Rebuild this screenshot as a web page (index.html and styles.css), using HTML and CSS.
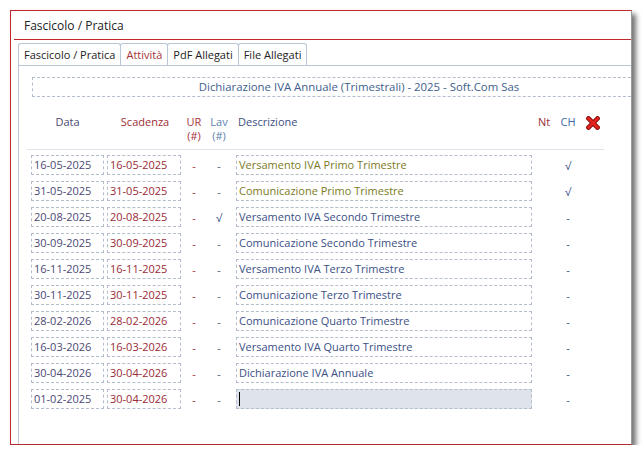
FILE: index.html
```html
<!DOCTYPE html>
<html lang="it">
<head>
    <meta charset="UTF-8">
    <title>Fascicolo / Pratica</title>
    <link rel="stylesheet" href="styles.css">
</head>
<body>

    <div class="window">
        <div class="title-bar">Fascicolo / Pratica</div>

        <div class="tabs">
            <div class="tab">Fascicolo / Pratica</div>
            <div class="tab active">Attività</div>
            <div class="tab">PdF Allegati</div>
            <div class="tab">File Allegati</div>
        </div>

        <div class="panel">
            <div class="caption">Dichiarazione IVA Annuale (Trimestrali) - 2025 - Soft.Com Sas</div>

            <div class="grid head">
                <div class="col-data">Data</div>
                <div class="col-scad">Scadenza</div>
                <div class="col-ur">UR<br>(#)</div>
                <div class="col-lav">Lav<br>(#)</div>
                <div class="col-desc">Descrizione</div>
                <div class="col-nt">Nt</div>
                <div class="col-ch">CH</div>
                <div class="col-del">
                    <svg width="14" height="14" viewBox="0 0 14 14">
                        <path d="M2.5 2.5 L11.5 11.5 M11.5 2.5 L2.5 11.5" stroke="#8e1010" stroke-width="4.6" stroke-linecap="square"/>
                        <path d="M2.5 2.5 L11.5 11.5 M11.5 2.5 L2.5 11.5" stroke="#e3241c" stroke-width="2.6" stroke-linecap="square"/>
                    </svg>
                </div>
            </div>

            <div class="rows">
                <div class="grid row">
                    <div class="field date">16-05-2025</div>
                    <div class="field due">16-05-2025</div>
                    <div class="dash ur">-</div>
                    <div class="dash lav">-</div>
                    <div class="field desc done">Versamento IVA Primo Trimestre</div>
                    <div></div>
                    <div class="dash ch">√</div>
                </div>
                <div class="grid row">
                    <div class="field date">31-05-2025</div>
                    <div class="field due">31-05-2025</div>
                    <div class="dash ur">-</div>
                    <div class="dash lav">-</div>
                    <div class="field desc done">Comunicazione Primo Trimestre</div>
                    <div></div>
                    <div class="dash ch">√</div>
                </div>
                <div class="grid row">
                    <div class="field date">20-08-2025</div>
                    <div class="field due">20-08-2025</div>
                    <div class="dash ur">-</div>
                    <div class="dash lav check">√</div>
                    <div class="field desc">Versamento IVA Secondo Trimestre</div>
                    <div></div>
                    <div class="dash ch">-</div>
                </div>
                <div class="grid row">
                    <div class="field date">30-09-2025</div>
                    <div class="field due">30-09-2025</div>
                    <div class="dash ur">-</div>
                    <div class="dash lav">-</div>
                    <div class="field desc">Comunicazione Secondo Trimestre</div>
                    <div></div>
                    <div class="dash ch">-</div>
                </div>
                <div class="grid row">
                    <div class="field date">16-11-2025</div>
                    <div class="field due">16-11-2025</div>
                    <div class="dash ur">-</div>
                    <div class="dash lav">-</div>
                    <div class="field desc">Versamento IVA Terzo Trimestre</div>
                    <div></div>
                    <div class="dash ch">-</div>
                </div>
                <div class="grid row">
                    <div class="field date">30-11-2025</div>
                    <div class="field due">30-11-2025</div>
                    <div class="dash ur">-</div>
                    <div class="dash lav">-</div>
                    <div class="field desc">Comunicazione Terzo Trimestre</div>
                    <div></div>
                    <div class="dash ch">-</div>
                </div>
                <div class="grid row">
                    <div class="field date">28-02-2026</div>
                    <div class="field due">28-02-2026</div>
                    <div class="dash ur">-</div>
                    <div class="dash lav">-</div>
                    <div class="field desc">Comunicazione Quarto Trimestre</div>
                    <div></div>
                    <div class="dash ch">-</div>
                </div>
                <div class="grid row">
                    <div class="field date">16-03-2026</div>
                    <div class="field due">16-03-2026</div>
                    <div class="dash ur">-</div>
                    <div class="dash lav">-</div>
                    <div class="field desc">Versamento IVA Quarto Trimestre</div>
                    <div></div>
                    <div class="dash ch">-</div>
                </div>
                <div class="grid row">
                    <div class="field date">30-04-2026</div>
                    <div class="field due">30-04-2026</div>
                    <div class="dash ur">-</div>
                    <div class="dash lav">-</div>
                    <div class="field desc">Dichiarazione IVA Annuale</div>
                    <div></div>
                    <div class="dash ch">-</div>
                </div>
                <div class="grid row">
                    <div class="field date">01-02-2025</div>
                    <div class="field due">30-04-2026</div>
                    <div class="dash ur">-</div>
                    <div class="dash lav">-</div>
                    <div class="field desc editing"><span class="caret"></span></div>
                    <div></div>
                    <div class="dash ch">-</div>
                </div>
            </div>
        </div>
    </div>

</body>
</html>
```

FILE: styles.css
```css
/* General */
body {
    margin: 0;
    background-color: #ffffff;
    font-family: "Open Sans", "Noto Sans", sans-serif;
    font-size: 11px;
    color: #333;
}

/* Window */
.window {
    box-sizing: border-box;
    width: 622px;
    height: 435px;
    margin: 10px 0 0 10px;
    display: flex;
    flex-direction: column;
    background-color: #fff;
    border: 1px solid #c1272d;
    border-right-color: #9a9a9a;
    border-bottom-color: #b02a30;
    box-shadow: 4px 4px 5px rgba(0,0,0,0.55);
}

.title-bar {
    height: 28px;
    line-height: 30px;
    margin-left: 3px;
    padding-left: 10px;
    font-size: 12px;
    color: #222;
    border-bottom: 1px solid #c1272d;
}

/* Tabs */
.tabs {
    display: flex;
    margin-top: 3px;
    padding-left: 7px;
}

.tab {
    height: 21px;
    line-height: 22px;
    padding: 0 5px;
    border: 1px solid #b9c6d5;
    border-bottom: none;
    border-radius: 3px 3px 0 0;
    margin-right: -1px;
    color: #222;
    white-space: nowrap;
}

.tab.active { color: #a4333b; }

.panel {
    flex: 1;
    margin-left: 7px;
    padding: 11px 0 0 8px;
    border-top: 1px solid #b9c6d5;
    border-left: 1px solid #b9c6d5;
    overflow: hidden;
}

.caption {
    box-sizing: border-box;
    width: 654px;
    margin-left: 5px;
    height: 20px;
    line-height: 18px;
    font-size: 11.4px;
    text-align: center;
    color: #40608e;
    border: 1px dashed #b4bdcc;
}

/* Grid */
.grid {
    display: grid;
    grid-template-columns: 78px 77px 24px 26px 302px 20px 28px 22px;
    width: 577px;
}

.head {
    margin-top: 18px;
    padding-bottom: 6px;
    line-height: 14px;
    border-bottom: 1px solid #dfe4ec;
}

.head > div { text-align: center; }

.col-data { color: #4a4a70; padding-left: 3px; }
.col-scad { color: #9b2d33; padding-left: 3px; }
.col-ur { color: #a8333c; }
.col-lav { color: #5b7fae; }
.head .col-desc { text-align: left; padding-left: 6px; color: #40507f; }
.col-nt { color: #9b2d3a; }
.col-ch { color: #4068a6; }
.col-del svg { display: block; margin: 1px auto 0; }

.rows { padding-top: 2px; }

.row {
    height: 26px;
    align-items: center;
}

.field {
    box-sizing: border-box;
    height: 20px;
    line-height: 18px;
    padding-left: 2px;
    border: 1px dashed #b4bdcc;
    white-space: nowrap;
    overflow: hidden;
}

.date { margin-left: 4px; width: 73px; color: #4b4973; }
.due { margin-left: 2px; width: 74px; color: #9a2b36; }
.desc { margin-left: 4px; width: 296px; color: #3b4f86; }
.desc.done { color: #7b7b24; }
.desc.editing { background-color: #dfe4ec; }

.caret {
    display: inline-block;
    width: 0;
    height: 14px;
    margin-top: 2px;
    border-left: 1px solid #000;
    vertical-align: top;
}

.dash { text-align: center; }
.ur { color: #a3333b; }
.lav { color: #555a70; }
.lav.check { color: #3b4f86; }
.ch { color: #3b4f86; }
```
